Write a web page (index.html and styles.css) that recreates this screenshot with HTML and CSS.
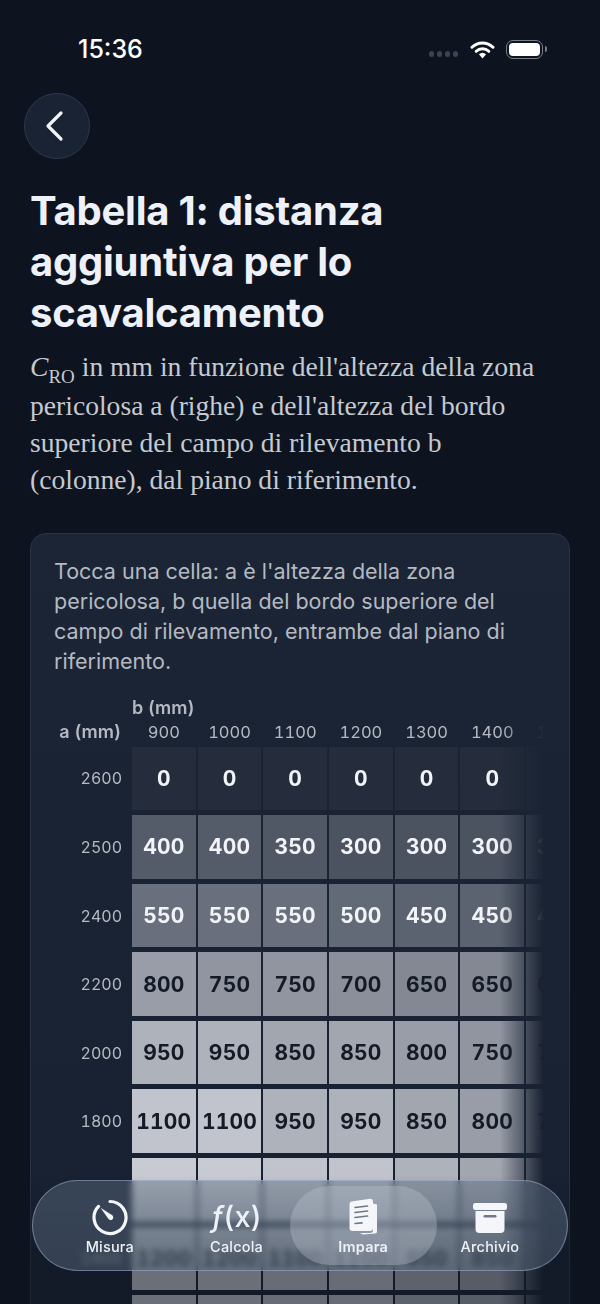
FILE: index.html
```html
<!DOCTYPE html>
<html lang="it">
<head>
    <meta charset="UTF-8">
    <meta name="viewport" content="width=device-width, initial-scale=1.0">
    <title>Tabella 1</title>
    <link rel="stylesheet" href="styles.css">
</head>
<body>
    <div class="screen">
        <div class="status-bar">
            <span class="time">15:36</span>
            <div class="status-icons">
                <div class="signal"><i></i><i></i><i></i><i></i></div>
                <svg class="wifi" width="25" height="19" viewBox="0 0 25 19">
                    <path d="M2 7.2a15 15 0 0 1 21 0" fill="none" stroke="#fff" stroke-width="3" stroke-linecap="round"/>
                    <path d="M6.2 11.3a9 9 0 0 1 12.6 0" fill="none" stroke="#fff" stroke-width="3" stroke-linecap="round"/>
                    <path d="M12.5 18.5l-3.6-4.2a5.4 5.4 0 0 1 7.2 0z" fill="#fff"/>
                </svg>
                <div class="battery"><div class="battery-fill"></div></div>
            </div>
        </div>

        <button class="back-btn" aria-label="Indietro">
            <svg width="22" height="32" viewBox="0 0 22 32">
                <path d="M17 3L4 16l13 13" fill="none" stroke="#f1f3f8" stroke-width="3.2" stroke-linecap="round" stroke-linejoin="round"/>
            </svg>
        </button>

        <h1>Tabella 1: distanza aggiuntiva per lo scavalcamento</h1>
        <p class="intro"><em>C</em><sub>RO</sub> in mm in funzione dell'altezza della zona pericolosa a (righe) e dell'altezza del bordo superiore del campo di rilevamento b (colonne), dal piano di riferimento.</p>

        <section class="card">
            <p class="hint">Tocca una cella: a è l'altezza della zona pericolosa, b quella del bordo superiore del campo di rilevamento, entrambe dal piano di riferimento.</p>

            <div class="table-scroll">
                <div class="grid">
                    <div class="axis axis-b">b (mm)</div>

                    <div class="axis axis-a">a (mm)</div>
                    <div class="col">900</div><div class="col">1000</div><div class="col">1100</div><div class="col">1200</div><div class="col">1300</div><div class="col">1400</div><div class="col">1500</div>

                    <div class="row-label">2600</div>
                    <div class="cell v0">0</div><div class="cell v0">0</div><div class="cell v0">0</div><div class="cell v0">0</div><div class="cell v0">0</div><div class="cell v0">0</div><div class="cell v0">0</div>

                    <div class="row-label">2500</div>
                    <div class="cell v400">400</div><div class="cell v400">400</div><div class="cell v350">350</div><div class="cell v300">300</div><div class="cell v300">300</div><div class="cell v300">300</div><div class="cell v300">300</div>

                    <div class="row-label">2400</div>
                    <div class="cell v550">550</div><div class="cell v550">550</div><div class="cell v550">550</div><div class="cell v500">500</div><div class="cell v450">450</div><div class="cell v450">450</div><div class="cell v400">400</div>

                    <div class="row-label">2200</div>
                    <div class="cell v800 dark">800</div><div class="cell v750 dark">750</div><div class="cell v750 dark">750</div><div class="cell v700 dark">700</div><div class="cell v650 dark">650</div><div class="cell v650 dark">650</div><div class="cell v600 dark">600</div>

                    <div class="row-label">2000</div>
                    <div class="cell v950 dark">950</div><div class="cell v950 dark">950</div><div class="cell v850 dark">850</div><div class="cell v850 dark">850</div><div class="cell v800 dark">800</div><div class="cell v750 dark">750</div><div class="cell v700 dark">700</div>

                    <div class="row-label">1800</div>
                    <div class="cell v1100 dark">1100</div><div class="cell v1100 dark">1100</div><div class="cell v950 dark">950</div><div class="cell v950 dark">950</div><div class="cell v850 dark">850</div><div class="cell v800 dark">800</div><div class="cell v750 dark">750</div>

                    <div class="row-label"></div>
                    <div class="cell v1200"></div><div class="cell v1200"></div><div class="cell v1100"></div><div class="cell v1100"></div><div class="cell v950"></div><div class="cell v850"></div><div class="cell v800"></div>

                    <div class="row-label">1400</div>
                    <div class="cell v1200 dark">1200</div><div class="cell v1200 dark">1200</div><div class="cell v1100 dark">1100</div><div class="cell v1100 dark">1100</div><div class="cell v950 dark">950</div><div class="cell v850 dark">850</div><div class="cell v800 dark">800</div>

                    <div class="row-label"></div>
                    <div class="cell v1200"></div><div class="cell v1200"></div><div class="cell v1100"></div><div class="cell v1100"></div><div class="cell v950"></div><div class="cell v850"></div><div class="cell v800"></div>
                </div>
            </div>
        </section>

        <div class="bottom-fade"></div>

        <nav class="tab-bar">
            <a class="tab">
                <svg width="38" height="38" viewBox="0 0 38 38">
                    <path d="M19 3.500a16 16 0 1 1-11.500 4.900" fill="none" stroke="#f4f6fa" stroke-width="3.200" stroke-linecap="round"/>
                    <path d="M9.500 9.800l11.400 7.200a2.700 2.700 0 1 1-3.600 3.800z" fill="#f4f6fa"/>
                </svg>
                <span>Misura</span>
            </a>
            <a class="tab">
                <span class="fx"><i>ƒ</i>(x)</span>
                <span>Calcola</span>
            </a>
            <a class="tab active">
                <svg width="38" height="38" viewBox="0 0 38 38">
                    <path d="M29 5.500l4 1v27a2 2 0 0 1-2 2l-12 1-3-1.500h10a3 3 0 0 0 3-3z" fill="#f4f6fa"/>
                    <path d="M7.500 3.500L26 .8a3 3 0 0 1 3 3V30a3 3 0 0 1-3 3H8.500a3 3 0 0 1-3-3V5.800a2.500 2.500 0 0 1 2-2.300z" fill="#f4f6fa"/>
                    <path d="M11 9.500l12.500-1.500M11 14.500l12.500-1.500M11 19.500l12.500-1.500M11 25.500l7-.6" fill="none" stroke="#6f7886" stroke-width="1.700" stroke-linecap="round"/>
                </svg>
                <span>Impara</span>
            </a>
            <a class="tab">
                <svg width="38" height="38" viewBox="0 0 38 38">
                    <rect x="2" y="5" width="34" height="7" rx="2.500" fill="#f4f6fa"/>
                    <path d="M4.500 13h29v18a4 4 0 0 1-4 4h-21a4 4 0 0 1-4-4z" fill="#f4f6fa"/>
                    <rect x="12.500" y="17" width="13" height="2.600" rx="1.300" fill="#6f7886"/>
                </svg>
                <span>Archivio</span>
            </a>
        </nav>
    </div>
</body>
</html>
```

FILE: styles.css
```css
:root {
    --bg: #0d1420;
    --panel: #1a2332;
    --panel-border: #2a3445;
    --text: #eef1f8;
    --text-soft: #c5c9d0;
    --text-muted: #b4b9c2;
}

* {
    margin: 0;
    padding: 0;
    box-sizing: border-box;
}

body {
    font-family: 'Inter', 'Liberation Sans', sans-serif;
    background-color: var(--bg);
    color: var(--text);
}

.screen {
    position: relative;
    width: 600px;
    height: 1304px;
    overflow: hidden;
    padding: 0 30px;
    background: var(--bg);
}

/* Status bar */
.status-bar {
    display: flex;
    align-items: center;
    height: 93px;
    margin: 0 -30px;
    padding: 5px 57px 0 78px;
}

.time {
    font-size: 25px;
    font-weight: 500;
    color: #fff;
}

.status-icons {
    margin-left: auto;
    display: flex;
    align-items: center;
}

.signal {
    display: flex;
    gap: 2.500px;
    margin: 10px 12px 0 0;
}

.signal i {
    width: 5.500px;
    height: 5.500px;
    border-radius: 50%;
    background: #3d4451;
}

.battery {
    position: relative;
    width: 37px;
    height: 19px;
    margin-left: 11px;
    padding: 2px;
    border: 1.500px solid #7a7e86;
    border-radius: 7px;
}

.battery::after {
    content: "";
    position: absolute;
    right: -5px;
    top: 5px;
    width: 2.500px;
    height: 6px;
    border-radius: 0 2px 2px 0;
    background: #7a7e86;
}

.battery-fill {
    height: 100%;
    border-radius: 4px;
    background: #fff;
}

/* Header */
.back-btn {
    display: flex;
    align-items: center;
    justify-content: center;
    width: 66px;
    height: 66px;
    margin-left: -6px;
    padding-right: 4px;
    border: 1px solid #2b3850;
    border-radius: 50%;
    background: #1a2333;
}

h1 {
    margin-top: 26px;
    font-size: 40px;
    line-height: 51px;
    font-weight: 700;
    letter-spacing: -0.25px;
    width: 480px;
}

.intro {
    width: 512px;
    margin-top: 10px;
    font-family: 'Liberation Serif', serif;
    font-size: 27.600px;
    line-height: 37px;
    color: var(--text-soft);
}

.intro sub {
    font-size: 19px;
    line-height: 21px;
}

/* Card with the table */
.card {
    margin-top: 35px;
    height: 900px;
    padding: 22px 0 0 23px;
    border: 1px solid var(--panel-border);
    border-radius: 16px;
    background: linear-gradient(180deg, #1c2535 0%, #172030 100%);
}

.hint {
    width: 470px;
    font-size: 21.500px;
    line-height: 30px;
    color: var(--text-muted);
}

.table-scroll {
    width: 490px;
    margin-top: 22px;
    overflow: hidden;
    -webkit-mask-image: linear-gradient(to right, #000 91%, transparent 100%);
    mask-image: linear-gradient(to right, #000 91%, transparent 100%);
}

.grid {
    display: grid;
    grid-template-columns: 76px repeat(7, 63.700px);
    column-gap: 2px;
    row-gap: 5px;
    align-items: center;
    font-variant-numeric: tabular-nums;
}

.axis {
    font-size: 18px;
    font-weight: 600;
    color: var(--text-muted);
    line-height: 19px;
}

.axis-b {
    grid-column: 2 / -1;
}

.axis-a {
    padding-right: 9px;
    text-align: right;
    line-height: 20px;
}

.col {
    font-size: 16.500px;
    line-height: 20px;
    text-align: center;
    color: var(--text-muted);
}

.row-label {
    padding-right: 8px;
    font-size: 16px;
    text-align: right;
    color: var(--text-muted);
}

.cell {
    display: flex;
    align-items: center;
    justify-content: center;
    height: 63.600px;
    font-size: 21px;
    font-weight: 700;
    letter-spacing: 0.2px;
    color: #f2f4f8;
}

.cell.dark {
    color: #141a26;
}

.v0 { background: #252d3c; }
.v300 { background: #4b5361; }
.v350 { background: #505866; }
.v400 { background: #545c6a; }
.v450 { background: #5c6370; }
.v500 { background: #636a77; }
.v550 { background: #696f7c; }
.v600 { background: #7a808b; }
.v650 { background: #838892; }
.v700 { background: #8a8f9a; }
.v750 { background: #9095a0; }
.v800 { background: #989da7; }
.v850 { background: #a2a6af; }
.v950 { background: #aeb2ba; }
.v1100 { background: #c1c4cc; }
.v1200 { background: #c8cbd2; }

/* Floating tab bar */
.bottom-fade {
    position: absolute;
    left: 0;
    right: 0;
    bottom: 0;
    height: 130px;
    background: linear-gradient(180deg, rgba(13, 20, 32, 0) 0%, rgba(13, 20, 32, 0.5) 70%);
}

.tab-bar {
    position: absolute;
    left: 32px;
    top: 1180px;
    width: 536px;
    height: 91px;
    display: grid;
    grid-template-columns: repeat(4, 126.700px);
    padding: 5px 0 5px 13.500px;
    border: 1px solid rgba(175, 190, 225, 0.45);
    border-radius: 46px;
    background: rgba(96, 112, 134, 0.45);
    -webkit-backdrop-filter: blur(3px);
    backdrop-filter: blur(3px);
}

.tab {
    display: flex;
    flex-direction: column;
    align-items: center;
    justify-content: flex-end;
    gap: 2px;
    padding-bottom: 10px;
    border-radius: 40px;
    font-size: 14.500px;
    font-weight: 500;
    letter-spacing: 0.2px;
    color: #eef1f6;
}

.tab.active {
    margin: 0 -10px;
    background: rgba(190, 198, 210, 0.35);
    font-weight: 600;
}

.fx {
    font-size: 29px;
    line-height: 38px;
    font-weight: 500;
}
```
